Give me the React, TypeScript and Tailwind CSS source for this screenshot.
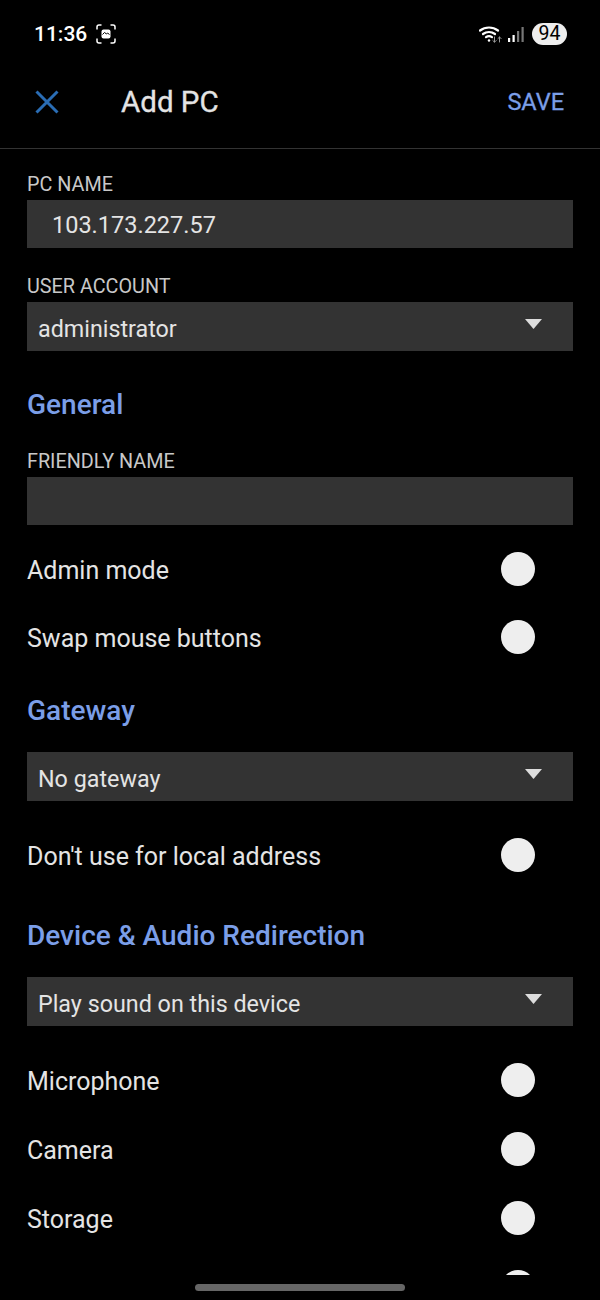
function Toggle({ tall }: { tall?: boolean }) {
  return (
    <div
      className={`w-[34px] h-[34px] rounded-full bg-[#eeeeee] mr-[38px] shrink-0 ${tall ? "mb-[3px]" : "mb-[2px]"}`}
    />
  );
}

function ToggleRow({ label, tall }: { label: string; tall?: boolean }) {
  return (
    <div className={`flex items-center justify-between ${tall ? "h-[69px]" : "h-[68px]"}`}>
      <span className="text-[25px] text-[#e4e4e4] mt-[1px]">{label}</span>
      <Toggle tall={tall} />
    </div>
  );
}

function FieldLabel({ children }: { children: string }) {
  return <div className="h-[24px] text-[19.8px] leading-[26px] text-[#c8c8c8]">{children}</div>;
}

function Heading({ children }: { children: string }) {
  return <h2 className="h-[36px] text-[28px] leading-[38px] font-medium text-[#7b9ee8]">{children}</h2>;
}

function Select({ value }: { value: string }) {
  return (
    <div className="flex items-center justify-between h-[49px] bg-[#333333] pl-[11px] pr-[31px]">
      <span className="text-[23.3px] text-[#e4e4e4] mt-[5px]">{value}</span>
      <svg width="17" height="10" viewBox="0 0 17 10" className="mb-[5px]">
        <path d="M0 0H17L8.5 10Z" fill="#dddddd" />
      </svg>
    </div>
  );
}

function StatusBar() {
  return (
    <div className="flex items-center justify-between h-[68px] pl-[34px] pr-[33px]">
      <div className="flex items-center gap-[9px]">
        <span className="text-[21px] font-medium text-white mt-[1px]">11:36</span>
        <svg width="20" height="20" viewBox="0 0 20 20" fill="none" stroke="#ffffff" strokeWidth="1.5">
          <path d="M1 5.5V3a2 2 0 0 1 2-2h2.5M14.5 1H17a2 2 0 0 1 2 2v2.5M19 14.5V17a2 2 0 0 1-2 2h-2.5M5.5 19H3a2 2 0 0 1-2-2v-2.5" />
          <rect x="5.5" y="5.5" width="9" height="9" rx="2" fill="#ffffff" stroke="none" />
          <path d="M6.5 10.5l2-2 2 1.5 1-1 2 1.5" stroke="#000000" strokeWidth="1" />
        </svg>
      </div>
      <div className="flex items-center">
        <svg width="25" height="20" viewBox="0 0 25 20" fill="none" stroke="#ffffff" strokeWidth="2.2" strokeLinecap="round">
          <path d="M1 6.5a15 15 0 0 1 18 0" />
          <path d="M4 10a10 10 0 0 1 12 0" />
          <path d="M7 13.2a5.5 5.5 0 0 1 6 0" />
          <circle cx="10" cy="16.5" r="1.2" fill="#ffffff" stroke="none" />
          <path d="M15.5 13v5M13.8 16.5l1.7 1.7 1.7-1.7M20.5 18v-5M18.9 14.6l1.6-1.6 1.6 1.6" stroke="#999999" strokeWidth="1" />
        </svg>
        <svg width="17" height="17" viewBox="0 0 17 17" className="ml-[4px]">
          <rect x="0" y="12" width="2.2" height="4" fill="#ffffff" />
          <rect x="4.5" y="9" width="2.2" height="7" fill="#ffffff" />
          <rect x="9" y="5" width="2.2" height="11" fill="#777777" />
          <rect x="13.5" y="1" width="2.2" height="15" fill="#777777" />
        </svg>
        <div className="flex items-center justify-center w-[35px] h-[22px] ml-[7px] rounded-full bg-[#eeeeee] text-[19.5px] text-black">
          94
        </div>
      </div>
    </div>
  );
}

export default function App() {
  return (
    <div className="relative flex flex-col w-[600px] h-[1300px] overflow-hidden bg-black font-['Roboto',sans-serif]">
      <StatusBar />
      <header className="flex items-center h-[68px] pl-[35px] pr-[36px] mb-[-1px]">
        <svg width="24" height="24" viewBox="0 0 24 24" fill="none" stroke="#2a6db5" strokeWidth="3" className="shrink-0">
          <path d="M1.5 1.5L22.5 22.5M22.5 1.5L1.5 22.5" />
        </svg>
        <h1 className="ml-[62px] text-[29.5px] text-[#e4e4e4] [-webkit-text-stroke:0.3px_#e4e4e4]">Add PC</h1>
        <span className="ml-auto mt-[2px] text-[23.5px] text-[#7b9ee8] [-webkit-text-stroke:0.3px_#7b9ee8]">SAVE</span>
      </header>
      <div className="h-[1px] mt-[13px] bg-[#333333]" />

      <main className="h-[1126px] overflow-hidden px-[27px] pt-[23px]">
        <FieldLabel>PC NAME</FieldLabel>
        <div className="flex items-center h-[48px] mt-[4px] pl-[25px] bg-[#333333] text-[23.5px] text-[#e4e4e4]">
          <span className="mt-[3px]">103.173.227.57</span>
        </div>
        <div className="mt-[26px]">
          <FieldLabel>USER ACCOUNT</FieldLabel>
        </div>
        <div className="mt-[4px]">
          <Select value="administrator" />
        </div>

        <div className="mt-[35px]">
          <Heading>General</Heading>
        </div>
        <div className="mt-[27px]">
          <FieldLabel>FRIENDLY NAME</FieldLabel>
        </div>
        <div className="h-[48px] mt-[4px] bg-[#333333]" />
        <div className="mt-[11px]">
          <ToggleRow label="Admin mode" />
          <ToggleRow label="Swap mouse buttons" />
        </div>

        <div className="mt-[20px]">
          <Heading>Gateway</Heading>
        </div>
        <div className="mt-[24px]">
          <Select value="No gateway" />
        </div>
        <div className="mt-[21px]">
          <ToggleRow label="Don't use for local address" />
        </div>

        <div className="mt-[27px]">
          <Heading>Device & Audio Redirection</Heading>
        </div>
        <div className="mt-[24px]">
          <Select value="Play sound on this device" />
        </div>
        <div className="mt-[21px]">
          <ToggleRow label="Microphone" tall />
          <ToggleRow label="Camera" tall />
          <ToggleRow label="Storage" tall />
          <ToggleRow label="" tall />
        </div>
      </main>

      <div className="absolute bottom-[9px] left-[195px] w-[210px] h-[7px] rounded-full bg-[#666666]" />
    </div>
  );
}
